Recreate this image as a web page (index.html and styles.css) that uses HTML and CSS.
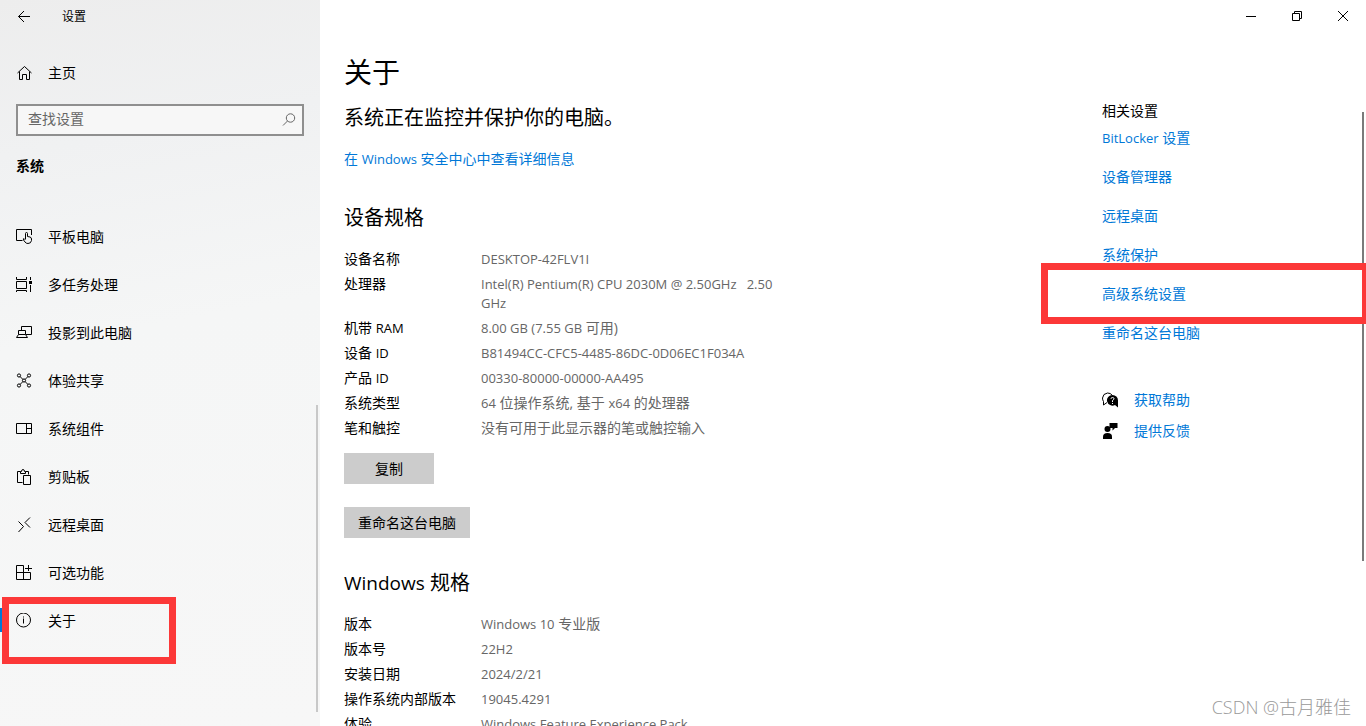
FILE: index.html
```html
<!DOCTYPE html>
<html lang="zh-CN">
<head>
  <meta charset="UTF-8" />
  <meta name="viewport" content="width=device-width, initial-scale=1.0" />
  <title>设置</title>
  <link rel="stylesheet" href="styles.css">
</head>
<body>
  <aside class="sidebar">
    <div class="titlebar">
      <button class="back" aria-label="返回">
        <svg width="16" height="16" viewBox="0 0 16 16"><path d="M14 7.500H2.500M8 2L2.500 7.500L8 13"/></svg>
      </button>
      <span class="app-title">设置</span>
    </div>

    <a class="nav-link home" href="#">
      <svg width="16" height="16" viewBox="0 0 16 16"><path d="M1.500 8L8.500 1.500L15.500 8M3.500 6.500V14.500H6.500V9.500H10.500V14.500H13.500V6.500"/></svg>
      <span>主页</span>
    </a>

    <form class="search">
      <input type="text" placeholder="查找设置" aria-label="查找设置">
      <svg width="16" height="16" viewBox="0 0 16 16"><circle cx="9.500" cy="6" r="4.200"/><path d="M6.500 9L2 13.500"/></svg>
    </form>

    <h2 class="group">系统</h2>

    <nav class="nav">
      <a class="nav-link" href="#">
        <svg width="16" height="16" viewBox="0 0 16 16"><path d="M6.500 11.500H0.500V0.500H15.500V6M9.500 10V4.500Q9.500 3.500 10.500 3.500T11.500 4.500V7.500L14 8Q15.500 8.500 15.500 10V11.500Q15 14.500 12 14.500Q10 14.500 9 13L7.500 11Q7 9.500 8 9.500L9.500 11"/></svg>
        <span>平板电脑</span>
      </a>
      <a class="nav-link" href="#">
        <svg width="16" height="16" viewBox="0 0 16 16"><path d="M0.500 0V2.500H10.500V0M0.500 4.500H10.500V11.500H0.500ZM0.500 15V13.500H10.500V15M14.500 0V3M14.500 8V15"/><path class="solid" d="M13 4H16V7H13Z"/></svg>
        <span>多任务处理</span>
      </a>
      <a class="nav-link" href="#">
        <svg width="16" height="16" viewBox="0 0 16 16"><path d="M5.500 5V1.500H15.500V9.500H10M2.500 9.500V5.500H9.500V9.500M0.500 12.500L2.500 9.500H9.500L11.500 12.500Z"/></svg>
        <span>投影到此电脑</span>
      </a>
      <a class="nav-link" href="#">
        <svg width="16" height="16" viewBox="0 0 16 16"><circle cx="3" cy="2.500" r="1.600"/><circle cx="13" cy="2.500" r="1.600"/><circle cx="3" cy="12.500" r="1.600"/><circle cx="13" cy="12.500" r="1.600"/><circle cx="8" cy="7.500" r="1.600"/><path d="M4 3.500L7 6.500M12 3.500L9 6.500M4 11.500L7 8.500M12 11.500L9 8.500"/></svg>
        <span>体验共享</span>
      </a>
      <a class="nav-link" href="#">
        <svg width="16" height="16" viewBox="0 0 16 16"><path d="M0.500 2.500H15.500V12.500H0.500ZM10.500 2.500V12.500M10.500 7.500H15.500"/></svg>
        <span>系统组件</span>
      </a>
      <a class="nav-link" href="#">
        <svg width="16" height="16" viewBox="0 0 16 16"><path d="M6.500 13.500H1.500V2.500H4.500M9.500 2.500H12.500V5.500M4.500 4.500V2.500H5.500Q5.500 0.500 7 0.500T8.500 2.500H9.500V4.500ZM7.500 6.500H14.500V15.500H7.500Z"/></svg>
        <span>剪贴板</span>
      </a>
      <a class="nav-link" href="#">
        <svg width="16" height="16" viewBox="0 0 16 16"><path d="M2.500 4.500L7.500 9.500L2.500 15M14 0.500L9 5.500L14 10.500"/></svg>
        <span>远程桌面</span>
      </a>
      <a class="nav-link" href="#">
        <svg width="16" height="16" viewBox="0 0 16 16"><path d="M7.500 0.500H0.500V14.500H14.500V7.500H0.500M7.500 0.500V14.500M12.500 0V6M9 3.500H16"/></svg>
        <span>可选功能</span>
      </a>
      <a class="nav-link active" href="#">
        <svg width="16" height="16" viewBox="0 0 16 16"><circle cx="7.500" cy="7" r="7"/><path d="M7.500 5.500V10.500M7.500 3.500V4.500"/></svg>
        <span>关于</span>
        <i class="mark mark-about"></i>
      </a>
    </nav>
    <i class="thumb"></i>
  </aside>

  <div class="page">
    <header class="window-controls">
      <button aria-label="最小化"><svg width="12" height="12" viewBox="0 0 12 12"><path d="M1 6.500H11"/></svg></button>
      <button aria-label="还原"><svg width="12" height="12" viewBox="0 0 12 12"><path d="M1.500 3.500H8.500V10.500H1.500ZM3.500 3V1.500H10.500V8.500H9"/></svg></button>
      <button aria-label="关闭"><svg width="12" height="12" viewBox="0 0 12 12"><path d="M1 1L11 11M11 1L1 11"/></svg></button>
    </header>

    <div class="columns">
      <main class="content">
        <h1>关于</h1>
        <p class="status">系统正在监控并保护你的电脑。</p>
        <a class="link" href="#">在 <span class="en">Windows</span> 安全中心中查看详细信息</a>

        <h2>设备规格</h2>
        <dl class="specs">
          <dt>设备名称</dt>
          <dd><span class="en">DESKTOP-42FLV1I</span></dd>
          <dt>处理器</dt>
          <dd><span class="en">Intel(R) Pentium(R) CPU 2030M @ 2.50GHz &nbsp; 2.50 GHz</span></dd>
          <dt>机带 <span class="en">RAM</span></dt>
          <dd><span class="en">8.00 GB (7.55 GB</span> 可用)</dd>
          <dt>设备 <span class="en">ID</span></dt>
          <dd><span class="en">B81494CC-CFC5-4485-86DC-0D06EC1F034A</span></dd>
          <dt>产品 <span class="en">ID</span></dt>
          <dd><span class="en">00330-80000-00000-AA495</span></dd>
          <dt>系统类型</dt>
          <dd><span class="en">64</span> 位操作系统, 基于 <span class="en">x64</span> 的处理器</dd>
          <dt>笔和触控</dt>
          <dd>没有可用于此显示器的笔或触控输入</dd>
        </dl>
        <div class="actions">
          <button class="btn">复制</button>
          <button class="btn">重命名这台电脑</button>
        </div>

        <h2><span class="en">Windows</span> 规格</h2>
        <dl class="specs">
          <dt>版本</dt>
          <dd><span class="en">Windows 10</span> 专业版</dd>
          <dt>版本号</dt>
          <dd><span class="en">22H2</span></dd>
          <dt>安装日期</dt>
          <dd><span class="en">2024/2/21</span></dd>
          <dt>操作系统内部版本</dt>
          <dd><span class="en">19045.4291</span></dd>
          <dt>体验</dt>
          <dd><span class="en">Windows Feature Experience Pack</span></dd>
        </dl>
      </main>

      <aside class="related">
        <h3>相关设置</h3>
        <ul class="related-list">
          <li><a class="link" href="#"><span class="en">BitLocker</span> 设置</a></li>
          <li><a class="link" href="#">设备管理器</a></li>
          <li><a class="link" href="#">远程桌面</a></li>
          <li><a class="link" href="#">系统保护</a></li>
          <li><a class="link" href="#">高级系统设置</a><i class="mark mark-advanced"></i></li>
          <li><a class="link" href="#">重命名这台电脑</a></li>
        </ul>
        <ul class="support">
          <li>
            <svg width="16" height="16" viewBox="0 0 16 16"><path d="M5 10.500L1.500 13V9.500Q0.500 8 0.500 6Q1 1.500 5.500 1Q8.500 1 10 3"/><path class="solid" d="M10.500 3A5.500 5.300 0 1 0 13 13L16 15.500V8.500A5.500 5.500 0 0 0 10.500 3Z"/><path class="knock" d="M9 6.800Q9 5.500 10.500 5.500T12 6.800Q12 7.500 10.500 8.500V10M10.500 11V12"/></svg>
            <a class="link" href="#">获取帮助</a>
          </li>
          <li>
            <svg width="16" height="16" viewBox="0 0 16 16"><path class="solid" d="M7.500 0H15.500V5H13L10.500 7.500V5H7.500Z"/><circle class="solid" cx="5.500" cy="6" r="3"/><path class="solid" d="M1 16V13.500Q1 10 5.500 10T10 13.500V16Z"/></svg>
            <a class="link" href="#">提供反馈</a>
          </li>
        </ul>
      </aside>
    </div>
    <i class="thumb thumb-page"></i>
  </div>

  <div class="watermark">CSDN @古月雅佳</div>
</body>
</html>
```

FILE: styles.css
```css
* {
  box-sizing: border-box;
}

html, body {
  margin: 0;
  height: 100%;
  overflow: hidden;
}

body {
  display: flex;
  position: relative;
  background: #fff;
  color: #000;
  font-family: "Open Sans", "Noto Sans CJK SC", sans-serif;
  font-size: 14px;
  line-height: 20px;
}

h1, h2, h3, p, ul, dl, dd {
  margin: 0;
  padding: 0;
  font-weight: 400;
}

ul {
  list-style: none;
}

button {
  border: 0;
  padding: 0;
  background: none;
  color: inherit;
  font: inherit;
}

a {
  color: inherit;
  text-decoration: none;
}

svg {
  flex: none;
  fill: none;
  stroke: #000;
  stroke-width: 1;
}

.solid {
  fill: #000;
  stroke: none;
}

.knock {
  stroke: #fff;
}

.en {
  font-size: 13px;
  line-height: 16px;
}

.link {
  color: #0078d7;
}

/* sidebar */

.sidebar {
  position: relative;
  flex: 0 0 320px;
  height: 100vh;
  background: linear-gradient(170deg, #ededed 0%, #f0f1f2 20%, #f5f6f6 45%, #f7f7f7 100%);
}

.titlebar {
  display: flex;
  align-items: center;
  height: 33px;
  padding-left: 16px;
}

.back {
  display: flex;
  width: 46px;
}

.app-title {
  font-size: 12px;
}

.nav-link {
  position: relative;
  display: flex;
  align-items: center;
  gap: 16px;
  height: 48px;
  padding-left: 16px;
}

.home {
  margin-top: 16px;
}

.search {
  display: flex;
  align-items: center;
  height: 32px;
  margin: 7px 16px 0;
  padding: 0 5px 0 10px;
  border: 2px solid #8f8f8f;
  background: #f7f7f7;
}

.search input {
  flex: 1;
  min-width: 0;
  padding: 0 0 2px;
  border: 0;
  outline: 0;
  background: none;
  font: inherit;
}

.search input::placeholder {
  color: #666;
  opacity: 1;
}

.search svg {
  stroke: #666;
}

.group {
  margin: 20px 16px 37px;
  font-size: 14px;
  font-weight: 700;
}

.active::before {
  content: "";
  position: absolute;
  top: 11px;
  left: 0;
  width: 4px;
  height: 24px;
  background: #0078d7;
}

.thumb {
  position: absolute;
  top: 405px;
  right: 2px;
  bottom: 14px;
  width: 2px;
  background: #c8c8c8;
}

/* red frames round the highlighted entries */

.mark {
  position: absolute;
  border: 7px solid #fc3838;
}

.mark-about {
  top: 0;
  left: 2px;
  width: 174px;
  height: 67px;
}

.mark-advanced {
  z-index: 1;
  top: -21px;
  left: -61px;
  right: -3px;
  height: 61px;
}

/* page */

.page {
  position: relative;
  flex: 1;
  min-width: 0;
  height: 100vh;
  overflow: hidden;
}

.window-controls {
  display: flex;
  justify-content: flex-end;
}

.window-controls button {
  display: flex;
  align-items: center;
  justify-content: center;
  width: 46px;
  height: 32px;
}

.columns {
  display: flex;
  padding-left: 24px;
}

.content {
  flex: 1;
  min-width: 0;
  padding-top: 22px;
}

h1 {
  font-size: 28px;
  line-height: 36px;
}

.status {
  margin: 13px 0 16px;
  font-size: 20px;
  line-height: 30px;
}

.content h2 {
  margin: 35px 0 17px;
  font-size: 20px;
  line-height: 28px;
}

.content h2 .en {
  font-size: 19px;
}

.specs {
  display: grid;
  grid-template-columns: 137px minmax(0, 310px);
  row-gap: 6px;
  line-height: 19px;
}

.specs dd {
  color: #666;
}

.actions {
  display: flex;
  flex-direction: column;
  align-items: flex-start;
  gap: 23px;
  margin-top: 16px;
}

.btn {
  min-width: 90px;
  height: 31px;
  padding: 0 14px;
  background: #ccc;
}

.content .actions + h2 {
  margin-top: 31px;
}

.related {
  flex: 0 0 264px;
  padding-top: 69px;
}

.related h3 {
  font-size: 14px;
}

.related-list {
  display: flex;
  flex-direction: column;
  gap: 19px;
  margin-top: 7px;
}

.related-list li {
  position: relative;
}

.support {
  display: flex;
  flex-direction: column;
  gap: 11px;
  margin-top: 47px;
}

.support li {
  display: flex;
  align-items: center;
  gap: 16px;
}

.thumb-page {
  top: 112px;
  bottom: 165px;
  background: #7a7a7a;
}

.watermark {
  position: absolute;
  right: 15px;
  bottom: 6px;
  color: #999;
  font-size: 18px;
  font-weight: 300;
  line-height: 26px;
}
```
